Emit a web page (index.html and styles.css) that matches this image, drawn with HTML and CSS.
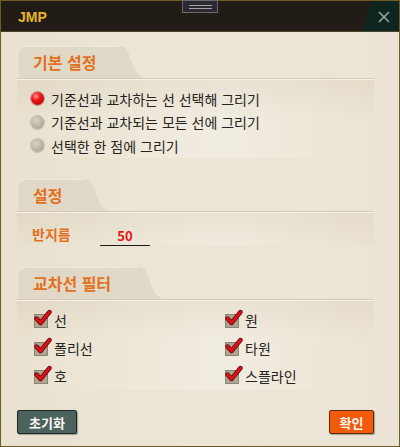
FILE: index.html
```html
<!DOCTYPE html>
<html lang="ko">
<head>
<meta charset="utf-8">
<link rel="stylesheet" href="styles.css">
</head>
<body>
<div class="window">
  <div class="titlebar">
    <span class="title">JMP</span>
    <div class="grip"><span></span><span></span></div>
    <div class="close">
      <svg width="12" height="12" viewBox="0 0 12 12"><path d="M1 1L11 11M11 1L1 11" stroke="#8fa7a0" stroke-width="1.6"/></svg>
    </div>
  </div>
  <div class="content">
    <section class="section s1">
      <div class="head">
        <div class="tab">기본 설정</div>
        <svg class="curve" width="26" height="32" viewBox="0 0 26 32"><path d="M0 0 C8 0 9 10 13 20 C16 28 21 32 26 32 L0 32 Z" fill="#e1d9c7"/></svg>
      </div>
      <div class="panel">
        <div class="radio-row"><span class="radio on"></span>기준선과 교차하는 선 선택해 그리기</div>
        <div class="radio-row"><span class="radio"></span>기준선과 교차되는 모든 선에 그리기</div>
        <div class="radio-row"><span class="radio"></span>선택한 한 점에 그리기</div>
      </div>
    </section>
    <section class="section s2">
      <div class="head">
        <div class="tab">설정</div>
        <svg class="curve" width="26" height="32" viewBox="0 0 26 32"><path d="M0 0 C8 0 9 10 13 20 C16 28 21 32 26 32 L0 32 Z" fill="#e1d9c7"/></svg>
      </div>
      <div class="panel">
        <div class="field"><span class="label">반지름</span><span class="value">50</span></div>
      </div>
    </section>
    <section class="section s3">
      <div class="head">
        <div class="tab">교차선 필터</div>
        <svg class="curve" width="26" height="32" viewBox="0 0 26 32"><path d="M0 0 C8 0 9 10 13 20 C16 28 21 32 26 32 L0 32 Z" fill="#e1d9c7"/></svg>
      </div>
      <div class="panel grid">
        <div class="check"><span class="box"><svg width="18" height="18" viewBox="0 0 18 18"><path d="M2.5 9.5 L6.5 14 L15.5 3" fill="none" stroke="#5a0c0c" stroke-width="4.4" stroke-linecap="round" stroke-linejoin="round"/><path d="M2.5 9.5 L6.5 14 L15.5 3" fill="none" stroke="#e01018" stroke-width="2.8" stroke-linecap="round" stroke-linejoin="round"/></svg></span>선</div>
        <div class="check"><span class="box"><svg width="18" height="18" viewBox="0 0 18 18"><path d="M2.5 9.5 L6.5 14 L15.5 3" fill="none" stroke="#5a0c0c" stroke-width="4.4" stroke-linecap="round" stroke-linejoin="round"/><path d="M2.5 9.5 L6.5 14 L15.5 3" fill="none" stroke="#e01018" stroke-width="2.8" stroke-linecap="round" stroke-linejoin="round"/></svg></span>원</div>
        <div class="check"><span class="box"><svg width="18" height="18" viewBox="0 0 18 18"><path d="M2.5 9.5 L6.5 14 L15.5 3" fill="none" stroke="#5a0c0c" stroke-width="4.4" stroke-linecap="round" stroke-linejoin="round"/><path d="M2.5 9.5 L6.5 14 L15.5 3" fill="none" stroke="#e01018" stroke-width="2.8" stroke-linecap="round" stroke-linejoin="round"/></svg></span>폴리선</div>
        <div class="check"><span class="box"><svg width="18" height="18" viewBox="0 0 18 18"><path d="M2.5 9.5 L6.5 14 L15.5 3" fill="none" stroke="#5a0c0c" stroke-width="4.4" stroke-linecap="round" stroke-linejoin="round"/><path d="M2.5 9.5 L6.5 14 L15.5 3" fill="none" stroke="#e01018" stroke-width="2.8" stroke-linecap="round" stroke-linejoin="round"/></svg></span>타원</div>
        <div class="check"><span class="box"><svg width="18" height="18" viewBox="0 0 18 18"><path d="M2.5 9.5 L6.5 14 L15.5 3" fill="none" stroke="#5a0c0c" stroke-width="4.4" stroke-linecap="round" stroke-linejoin="round"/><path d="M2.5 9.5 L6.5 14 L15.5 3" fill="none" stroke="#e01018" stroke-width="2.8" stroke-linecap="round" stroke-linejoin="round"/></svg></span>호</div>
        <div class="check"><span class="box"><svg width="18" height="18" viewBox="0 0 18 18"><path d="M2.5 9.5 L6.5 14 L15.5 3" fill="none" stroke="#5a0c0c" stroke-width="4.4" stroke-linecap="round" stroke-linejoin="round"/><path d="M2.5 9.5 L6.5 14 L15.5 3" fill="none" stroke="#e01018" stroke-width="2.8" stroke-linecap="round" stroke-linejoin="round"/></svg></span>스플라인</div>
      </div>
    </section>
    <div class="buttons">
      <button class="btn reset">초기화</button>
      <button class="btn ok">확인</button>
    </div>
  </div>
</div>
</body>
</html>
```

FILE: styles.css
```css
* { box-sizing: border-box; }
html, body { margin: 0; padding: 0; }
body {
  width: 400px;
  height: 447px;
  background: #1c1810;
  font-family: "Noto Sans CJK KR", "Noto Sans", sans-serif;
}
.window {
  position: relative;
  width: 400px;
  height: 447px;
  border: 1px solid #6e5a26;
  background: #ebe3d3;
  display: flex;
  flex-direction: column;
  box-shadow: inset 0 0 0 1px #241e12;
}
.titlebar {
  position: relative;
  height: 31px;
  flex: none;
  background: #211d16;
  border-bottom: 1px solid #4a4128;
  display: flex;
  align-items: center;
  padding-left: 17px;
}
.title {
  font-family: "Liberation Sans", Arial, sans-serif;
  font-weight: bold;
  font-size: 14px;
  color: #e9b526;
  margin-top: 2px;
}
.grip {
  position: absolute;
  left: 181px;
  top: -1px;
  width: 36px;
  height: 13px;
  background: #2a2830;
  border: 1px solid #6c6a6c;
  display: flex;
  flex-direction: column;
  align-items: center;
  justify-content: center;
  gap: 2px;
}
.grip span {
  display: block;
  width: 23px;
  height: 1px;
  background: #a4a2a6;
}
.close {
  margin-left: auto;
  width: 40px;
  height: 30px;
  background: linear-gradient(108deg, transparent 0 26%, #0e2520 27% 100%);
  display: flex;
  align-items: center;
  justify-content: center;
  padding-left: 10px;
  padding-top: 1px;
}
.content {
  flex: 1;
  padding: 14px 25px 0 16px;
  display: flex;
  flex-direction: column;
  background: linear-gradient(90deg, #e9e1cf 0%, #ede6d7 50%, #ebe3d3 100%);
}
.head {
  display: flex;
  align-items: flex-end;
  height: 32px;
}
.tab {
  height: 32px;
  background: #e1d9c7;
  border-radius: 7px 0 0 0;
  padding: 0 0 0 16px;
  font-weight: bold;
  font-size: 16px;
  color: #e2701e;
  display: flex;
  align-items: center;
  box-shadow: inset 1px 1px 0 #efe9dc;
}
.s1 .tab { width: 103px; }
.s2 .tab { width: 68px; }
.s3 .tab { width: 122px; }
.curve { display: block; flex: none; }
.panel {
  border-top: 1px solid #d4cab6;
  box-shadow: inset 0 1px 0 #f6f1e6;
  background: linear-gradient(180deg, rgba(160,140,100,0.10) 0px, rgba(160,140,100,0.0) 40px),
              linear-gradient(90deg, rgba(255,255,255,0.0) 0%, rgba(255,255,255,0.25) 60%, rgba(255,255,255,0) 100%);
}
.s1 .panel { padding: 8px 0 0 14px; }
.radio-row {
  height: 23.5px;
  display: flex;
  align-items: center;
  font-size: 14px;
  color: #262420;
}
.radio {
  width: 13px;
  height: 13px;
  border-radius: 50%;
  margin-right: 7px;
  background: radial-gradient(circle at 40% 35%, #d8d2c6 0%, #b9b2a4 55%, #a29a8a 100%);
  box-shadow: 0 0 0 1px rgba(140,130,110,0.35);
}
.radio.on {
  background: radial-gradient(circle at 38% 32%, #ff9a9a 0%, #f01818 35%, #c00808 75%, #8a0404 100%);
  box-shadow: 0 0 0 1px rgba(120,20,20,0.35);
}
.s2 { margin-top: 21px; }
.s2 .panel { padding: 11px 0 0 15px; }
.field {
  display: flex;
  align-items: center;
  height: 22px;
}
.label {
  font-weight: bold;
  font-size: 14px;
  color: #e2701e;
  width: 68px;
}
.value {
  width: 50px;
  text-align: center;
  font-weight: bold;
  font-size: 13px;
  color: #e41414;
  border-bottom: 1px solid #1a1a1a;
  line-height: 18px;
  margin-top: 6px;
}
.s3 { margin-top: 22px; }
.grid {
  display: grid;
  grid-template-columns: 191px 1fr;
  grid-auto-rows: 28px;
  padding: 6px 0 0 17px;
}
.check {
  display: flex;
  align-items: center;
  font-size: 14px;
  color: #262420;
}
.box {
  position: relative;
  width: 14px;
  height: 14px;
  background: #aea592;
  border: 1px solid #8d8470;
  margin-right: 6px;
  margin-top: 3px;
}
.box svg {
  position: absolute;
  left: -1px;
  top: -6px;
}
.buttons {
  margin-top: auto;
  margin-bottom: 12px;
  display: flex;
  justify-content: space-between;
  padding-right: 0;
}
.btn {
  height: 24px;
  border-radius: 2px;
  font-family: "Noto Sans CJK KR", sans-serif;
  font-weight: bold;
  font-size: 13px;
  color: #fbf8f2;
  padding: 0;
  display: flex;
  align-items: center;
  justify-content: center;
}
.reset {
  width: 60px;
  background: #4c625c;
  border: 1px solid #1f2a26;
  box-shadow: 1px 1px 1px rgba(0,0,0,0.3);
}
.ok {
  width: 45px;
  background: #f25a0c;
  border: 1px solid #5a2a10;
  box-shadow: 1px 1px 1px rgba(0,0,0,0.3);
}
```
